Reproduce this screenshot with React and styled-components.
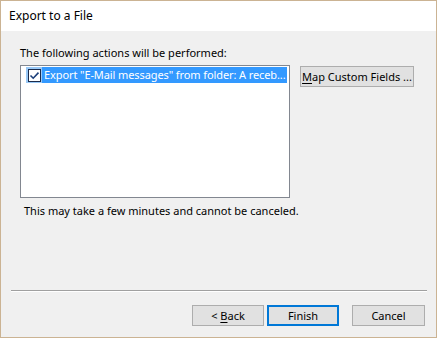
import { styled, createGlobalStyle } from "styled-components"

const GlobalStyle = createGlobalStyle`
    html, body {
        margin: 0;
        padding: 0;
        background: #f0f0f0;
    }

    body {
        font-family: "Noto Sans", "Open Sans", sans-serif;
        font-size: 11px;
        color: #000;
    }
`

const CheckIcon = () => (
    <svg width="13" height="13" viewBox="0 0 13 13">
        <rect x="0.5" y="0.5" width="12" height="12" fill="#fff" stroke="#1c2c4c" />
        <path d="M2.5 6.5 L5.2 9.2 L10.5 3.6" fill="none" stroke="#1c3f7a" strokeWidth="1.6" />
    </svg>
)

const App = () => {

    return (
        <>
            <GlobalStyle />
            <Window>
                <TitleBar>Export to a File</TitleBar>
                <Body>
                    <Content>
                        <Label>The following actions will be performed:</Label>
                        <Row>
                            <ListBox>
                                <Item>
                                    <CheckCell>
                                        <CheckIcon />
                                    </CheckCell>
                                    <ItemText>Export "E-Mail messages" from folder: A receb...</ItemText>
                                </Item>
                            </ListBox>
                            <Button $width={114} $offset={1}>
                                <u>M</u>ap Custom Fields ...
                            </Button>
                        </Row>
                        <Note>This may take a few minutes and cannot be canceled.</Note>
                    </Content>
                    <Footer>
                        <Separator />
                        <Buttons>
                            <Button $width={72}>
                                &lt; <u>B</u>ack
                            </Button>
                            <Button $width={72} $default>Finish</Button>
                            <Button $width={73} $gap={13}>Cancel</Button>
                        </Buttons>
                    </Footer>
                </Body>
            </Window>
        </>
    )
}

const Window = styled.div`
    display: flex;
    flex-direction: column;
    width: 437px;
    height: 338px;
    box-sizing: border-box;
    border: 1px solid #cbb393;
    overflow: hidden;
`

const TitleBar = styled.div`
    display: flex;
    align-items: center;
    height: 30px;
    padding: 0 0 2px 8px;
    box-sizing: border-box;
    background: #fff;
    font-size: 12px;
`

const Body = styled.div`
    flex: 1;
    display: flex;
    flex-direction: column;
    background: #f0f0f0;
`

const Content = styled.div`
    display: flex;
    flex-direction: column;
    padding: 14px 19px 0 19px;
`

const Label = styled.div`
    line-height: 16px;
    height: 16px;
    margin-bottom: 4px;
`

const Row = styled.div`
    display: flex;
    align-items: flex-start;
    gap: 10px;
`

const ListBox = styled.div`
    width: 270px;
    height: 133px;
    box-sizing: border-box;
    border: 1px solid #828790;
    background: #fff;
    padding: 1px 2px 0 5px;
`

const Item = styled.div`
    display: flex;
    align-items: stretch;
    height: 16px;
`

const CheckCell = styled.div`
    display: flex;
    align-items: center;
    justify-content: center;
    width: 16px;
    flex-shrink: 0;
    background: #99c9f7;
`

const ItemText = styled.div`
    flex: 1;
    background: #3399ff;
    color: #fff;
    line-height: 16px;
    padding-left: 2px;
    letter-spacing: -0.1px;
    white-space: nowrap;
    overflow: hidden;
`

const Note = styled.div`
    margin: 5px 0 0 4px;
    line-height: 16px;
`

const Footer = styled.div`
    margin-top: auto;
    display: flex;
    flex-direction: column;
    padding-bottom: 11px;
`

const Separator = styled.div`
    margin: 0 9px 0 10px;
    border-top: 1px solid #a0a0a0;
    border-bottom: 1px solid #fff;
`

const Buttons = styled.div`
    display: flex;
    justify-content: flex-end;
    gap: 3px;
    padding: 13px 11px 0 0;
`

const Button = styled.button`
    display: block;
    flex-shrink: 0;
    width: ${p => p.$width}px;
    height: 21px;
    margin: ${p => p.$offset || 0}px 0 0 ${p => (p.$gap ? p.$gap - 3 : 0)}px;
    padding: 0;
    box-sizing: border-box;
    border: ${p => (p.$default ? "2px solid #0078d7" : "1px solid #adadad")};
    background: #e1e1e1;
    font-family: inherit;
    font-size: 11px;
    line-height: 16px;
    color: #000;
    text-align: center;
    white-space: nowrap;

    u {
        text-underline-offset: 2px;
    }
`

export default App
